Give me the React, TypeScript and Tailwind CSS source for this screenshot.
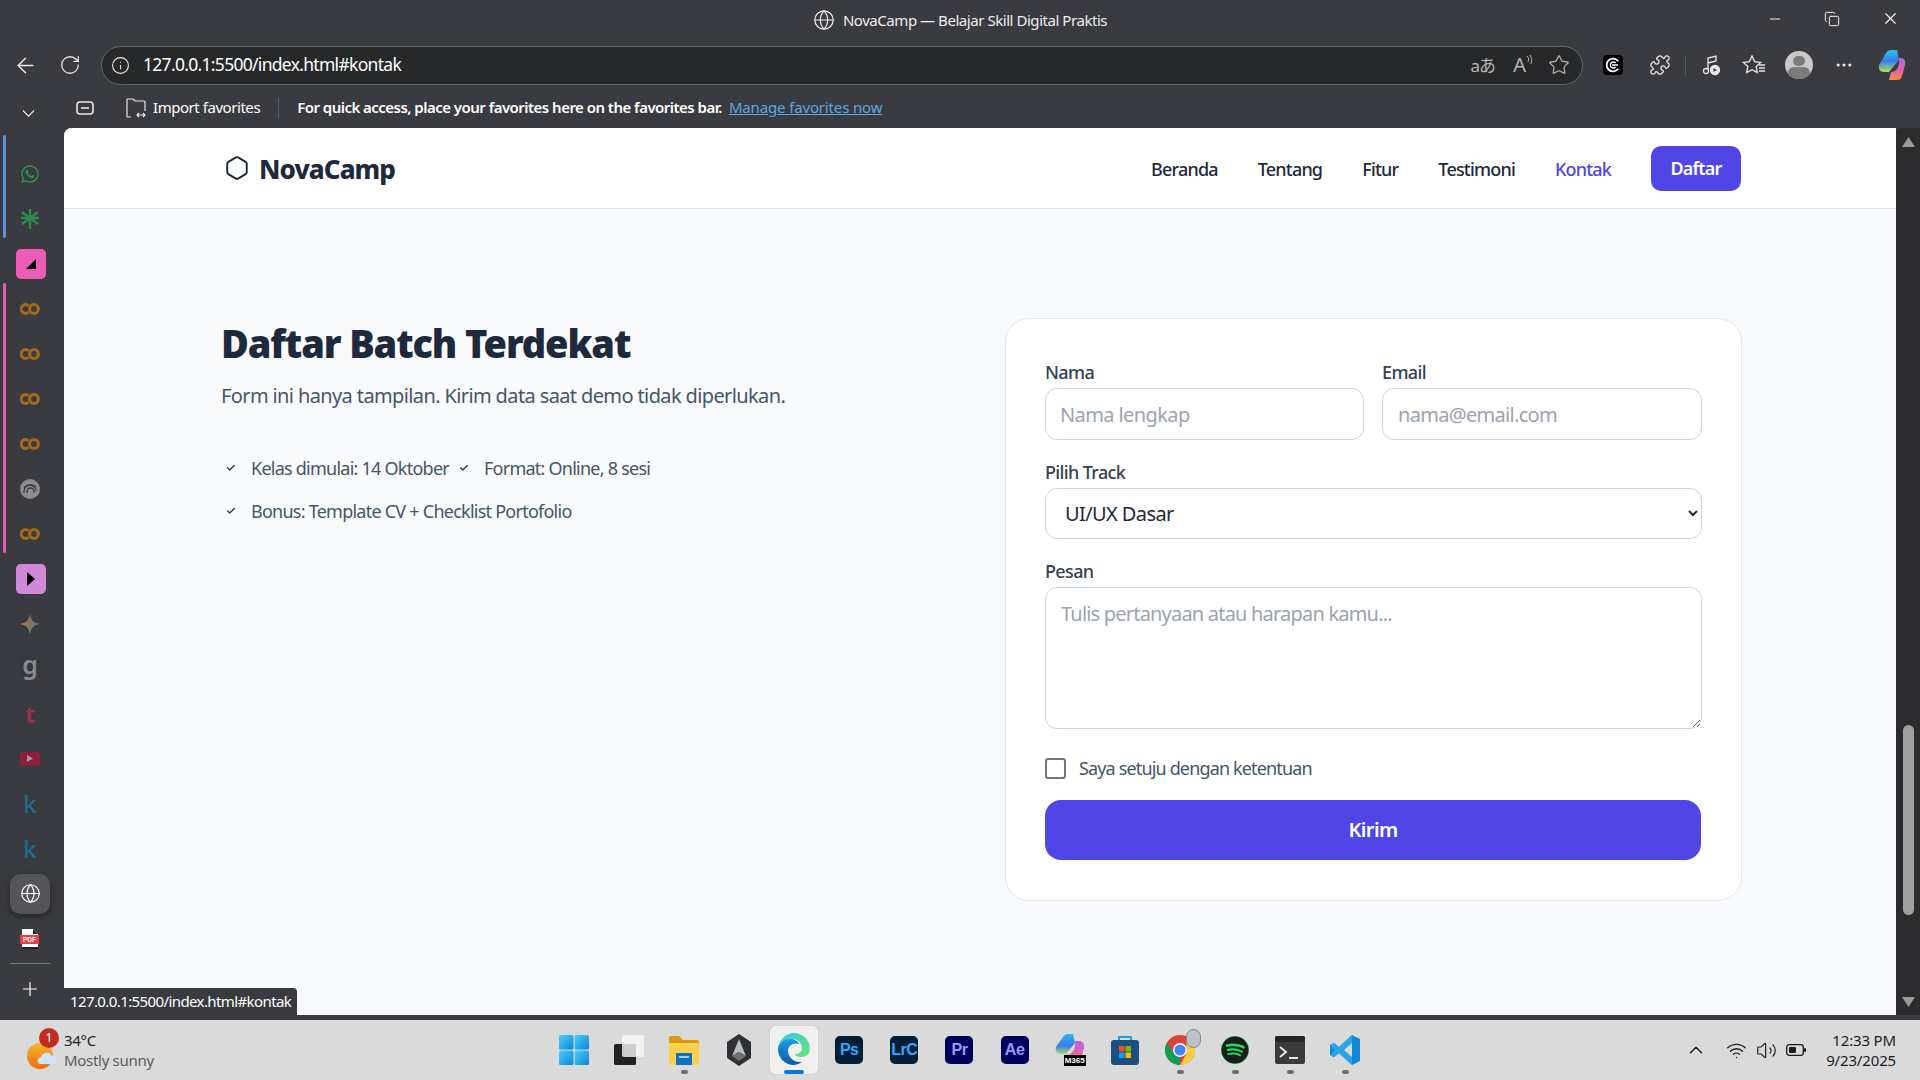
import {
  ArrowLeft,
  Check,
  ChevronDown,
  ChevronUp,
  Copy,
  Globe,
  Hexagon,
  Info,
  Minus,
  MoreHorizontal,
  Plus,
  Puzzle,
  RotateCw,
  Star,
  Volume2,
  Wifi,
  X,
} from "lucide-react";
import { FaSpotify, FaWhatsapp } from "react-icons/fa";

const navLinks = ["Beranda", "Tentang", "Fitur", "Testimoni"];

function ColabIcon() {
  return (
    <svg width="20" height="12" viewBox="0 0 20 12" fill="none" stroke="#a56a1c" strokeWidth="3">
      <path d="M8.6 2.8a4.4 4.4 0 1 0 0 6.4" />
      <circle cx="14" cy="6" r="4.4" />
    </svg>
  );
}

function SideItem({ children }: { children: React.ReactNode }) {
  return <div className="h-[45px] flex items-center justify-center shrink-0">{children}</div>;
}

function Sidebar() {
  return (
    <aside className="relative w-[64px] shrink-0 bg-[#3a3b40] pt-[23px] pr-[4px] flex flex-col">
      <div className="absolute left-[3px] top-[7px] h-[103px] w-[3px] rounded-full bg-[#5b93dc]" />
      <div className="absolute left-[3px] top-[155px] h-[270px] w-[3px] rounded-full bg-[#e45cb3]" />
      <SideItem>
        <FaWhatsapp className="text-[#2f9352]" size={20} />
      </SideItem>
      <SideItem>
        <svg width="18" height="20" viewBox="0 0 18 20" stroke="#2f8a4c" strokeWidth="2.4">
          <path d="M9 0v20M1 3l16 12M17 3L1 15M0 9h18" />
        </svg>
      </SideItem>
      <SideItem>
        <div className="ml-[2px] w-[30px] h-[30px] rounded-[5px] bg-[#ee5cb9] flex items-center justify-center">
          <svg width="12" height="12" viewBox="0 0 12 12">
            <path d="M11 1v10H1z" fill="#000" />
          </svg>
        </div>
      </SideItem>
      <SideItem><ColabIcon /></SideItem>
      <SideItem><ColabIcon /></SideItem>
      <SideItem><ColabIcon /></SideItem>
      <SideItem><ColabIcon /></SideItem>
      <SideItem>
        <svg width="20" height="20" viewBox="0 0 20 20" fill="none">
          <circle cx="10" cy="10" r="10" fill="#8d8d8f" />
          <path d="M4 14v-2a6 6 0 0 1 12 0M7 14v-1.5a3.5 3.5 0 0 1 7 0V14M4 8.5A8 8 0 0 1 16 8" stroke="#3a3b40" strokeWidth="1.3" />
        </svg>
      </SideItem>
      <SideItem><ColabIcon /></SideItem>
      <SideItem>
        <div className="ml-[2px] w-[30px] h-[30px] rounded-[5px] bg-[#cf8ad9] flex items-center justify-center">
          <svg width="10" height="14" viewBox="0 0 10 14">
            <path d="M1 0l8 7-8 7z" fill="#000" />
          </svg>
        </div>
      </SideItem>
      <SideItem>
        <svg width="20" height="20" viewBox="0 0 20 20">
          <defs>
            <linearGradient id="gemH" x1="0" y1="0" x2="1" y2="0">
              <stop offset="0" stopColor="#c9683a" />
              <stop offset="0.5" stopColor="#8a6a80" />
              <stop offset="1" stopColor="#2f6fae" />
            </linearGradient>
            <linearGradient id="gemV" x1="0" y1="0" x2="0" y2="1">
              <stop offset="0" stopColor="#c9683a" stopOpacity="0" />
              <stop offset="1" stopColor="#3f9a5a" />
            </linearGradient>
          </defs>
          <path d="M10 0c1 6 3 9 10 10-7 1-9 4-10 10-1-6-3-9-10-10 7-1 9-4 10-10z" fill="url(#gemH)" />
          <path d="M10 0c1 6 3 9 10 10-7 1-9 4-10 10-1-6-3-9-10-10 7-1 9-4 10-10z" fill="url(#gemV)" />
        </svg>
      </SideItem>
      <SideItem>
        <span className="w-[20px] h-[20px] -mt-[3px] bg-[#34383e] flex items-center justify-center text-[25px] leading-none font-semibold text-[#878a8e] pb-[6px]">g</span>
      </SideItem>
      <SideItem>
        <span className="text-[23px] leading-none font-bold text-[#9a2f4c] mt-[2px]">t</span>
      </SideItem>
      <SideItem>
        <div className="w-[20px] h-[14px] rounded-[3px] bg-[#8e1f3a] flex items-center justify-center">
          <svg width="6" height="7" viewBox="0 0 6 7">
            <path d="M0 0l6 3.5L0 7z" fill="#a39a9c" />
          </svg>
        </div>
      </SideItem>
      <SideItem>
        <span className="text-[24px] leading-none font-medium text-[#1f6a8c]">k</span>
      </SideItem>
      <SideItem>
        <span className="text-[24px] leading-none font-medium text-[#1f6a8c]">k</span>
      </SideItem>
      <SideItem>
        <div className="w-[40px] h-[40px] rounded-[10px] bg-[#54555a] shadow-[0_2px_6px_rgba(0,0,0,0.45)] flex items-center justify-center">
          <Globe size={21} strokeWidth={1.4} className="text-white" />
        </div>
      </SideItem>
      <SideItem>
        <svg width="20" height="20" viewBox="0 0 20 20">
          <path d="M2 0h11l5 5v15H2z" fill="#fff" />
          <rect x="0" y="6" width="19" height="9" fill="#ef3b3f" />
          <path d="M13 0l5 5h-5z" fill="#222" />
          <rect x="2" y="18" width="16" height="2" fill="#222" />
          <text x="9.5" y="13.2" textAnchor="middle" fontSize="6.6" fontWeight="700" fontFamily="Liberation Sans" fill="#fff">PDF</text>
        </svg>
      </SideItem>
      <div className="mx-[10px] mt-[2px] h-px w-[40px] bg-[#77787c]" />
      <div className="flex justify-center mt-[14px]">
        <Plus size={22} strokeWidth={1.3} className="text-white" />
      </div>
    </aside>
  );
}

function ContactForm() {
  return (
    <form className="w-[737px] h-[583px] rounded-[24px] border border-[#e2e8f0] bg-white pl-[39px] pr-[40px] pt-[41px]">
      <div className="grid grid-cols-[319px_320px] gap-x-[18px]">
        <label className="block text-[18px] leading-[24px] font-medium text-[#334155] tracking-[-0.035em]">
          Nama
          <input
            placeholder="Nama lengkap"
            className="block mt-[4px] w-full h-[52px] rounded-[12px] border border-[#cbd5e1] bg-white px-[14px] text-[20px] font-normal tracking-[-0.03em] outline-none placeholder:text-[#9ca3af]"
          />
        </label>
        <label className="block text-[18px] leading-[24px] font-medium text-[#334155] tracking-[-0.035em]">
          Email
          <input
            placeholder="nama@email.com"
            className="block mt-[4px] w-full h-[52px] rounded-[12px] border border-[#cbd5e1] bg-white px-[15px] text-[20px] font-normal tracking-[-0.035em] outline-none placeholder:text-[#9ca3af]"
          />
        </label>
      </div>
      <label className="block mt-[20px] text-[18px] leading-[24px] font-medium text-[#334155] tracking-[-0.035em]">
        Pilih Track
        <select className="block mt-[4px] w-[657px] h-[51px] rounded-[12px] border border-[#cbd5e1] bg-white px-[15px] text-[20px] font-normal text-[#1e293b] tracking-[-0.03em] outline-none">
          <option>UI/UX Dasar</option>
          <option>Frontend Pemula</option>
          <option>Data Analyst</option>
        </select>
      </label>
      <label className="block mt-[20px] text-[18px] leading-[24px] font-medium text-[#334155] tracking-[-0.035em]">
        Pesan
        <textarea
          placeholder="Tulis pertanyaan atau harapan kamu..."
          className="block mt-[4px] w-[657px] h-[142px] rounded-[12px] border border-[#cbd5e1] bg-white px-[15px] py-[14px] text-[20px] font-normal tracking-[-0.04em] outline-none placeholder:text-[#9ca3af]"
        />
      </label>
      <label className="flex items-center gap-[13px] mt-[27px] h-[24px] text-[18px] text-[#475569] tracking-[-0.047em]">
        <input type="checkbox" className="w-[21px] h-[21px] m-0 appearance-none rounded-[3px] border-2 border-[#767676] bg-white" />
        Saya setuju dengan ketentuan
      </label>
      <button type="button" className="block mt-[20px] w-[656px] h-[60px] rounded-[16px] bg-[#4f46e5] text-[20px] font-semibold text-white tracking-[-0.03em]">
        Kirim
      </button>
    </form>
  );
}

function Page() {
  return (
    <main className="relative flex-1 min-w-0 mb-[5px] bg-[#f8fafc] rounded-tl-[8px] overflow-hidden">
      <header className="h-[81px] bg-white border-b border-[#e2e8f0] pl-[157px] flex items-center">
        <div className="w-[1520px] flex items-center justify-between">
          <div className="flex items-center gap-[9px] pl-[3px] pt-[2px]">
            <Hexagon size={26} strokeWidth={1.8} className="text-[#1e293b] -mt-[3px]" />
            <span className="text-[26px] font-extrabold text-[#1e293b] tracking-[-0.035em]">NovaCamp</span>
          </div>
          <nav className="flex items-center gap-[40px] text-[18px] font-medium text-[#1e293b] tracking-[-0.045em]">
            {navLinks.map((link) => (
              <a key={link} className="pt-[2px]">{link}</a>
            ))}
            <a className="pt-[2px] text-[#4f46e5]">Kontak</a>
            <a className="h-[45px] w-[90px] rounded-[10px] bg-[#4f46e5] text-white font-semibold flex items-center justify-center">Daftar</a>
          </nav>
        </div>
      </header>
      <section className="pl-[157px] pt-[109px]">
        <div className="w-[1521px] grid grid-cols-[736px_737px] gap-x-[48px]">
          <div>
            <h2 className="text-[38px] leading-[50px] font-black text-[#1e293b] tracking-[-0.03em]">Daftar Batch Terdekat</h2>
            <p className="mt-[14px] text-[20px] leading-[28px] text-[#475569] tracking-[-0.031em]">
              Form ini hanya tampilan. Kirim data saat demo tidak diperlukan.
            </p>
            <ul className="mt-[44px] text-[18px] leading-[24px] text-[#475569] tracking-[-0.042em]">
              <li className="inline-flex items-center h-[24px]">
                <Check size={10} strokeWidth={3.5} className="ml-[5px] mr-[15px] text-[#334155]" />
                Kelas dimulai: 14 Oktober
              </li>
              <li className="inline-flex items-center h-[24px]">
                <Check size={10} strokeWidth={3.5} className="ml-[10px] mr-[15px] text-[#334155]" />
                Format: Online, 8 sesi
              </li>
              <li className="flex items-center h-[24px] mt-[19px]">
                <Check size={10} strokeWidth={3.5} className="ml-[5px] mr-[15px] text-[#334155]" />
                Bonus: Template CV + Checklist Portofolio
              </li>
            </ul>
          </div>
          <ContactForm />
        </div>
      </section>
      <div className="absolute left-0 bottom-0 h-[27px] px-[6px] rounded-tr-[4px] bg-[#3a3b40] flex items-center text-[15px] text-white tracking-[-0.04em]">
        127.0.0.1:5500/index.html#kontak
      </div>
    </main>
  );
}

function Scrollbar() {
  return (
    <div className="w-[24px] shrink-0 mb-[5px] bg-[#2c2c2e] rounded-tl-[6px] flex flex-col items-center">
      <svg width="13" height="10" viewBox="0 0 13 10" className="mt-[9px]">
        <path d="M6.5 0l6.5 10H0z" fill="#9a9a9a" />
      </svg>
      <div className="mt-[578px] w-[11px] h-[190px] rounded-full bg-[#9f9f9f]" />
      <svg width="13" height="10" viewBox="0 0 13 10" className="mt-[82px]">
        <path d="M6.5 10l6.5-10H0z" fill="#9a9a9a" />
      </svg>
    </div>
  );
}

function TaskSlot({ children, dot, active }: { children: React.ReactNode; dot?: boolean; active?: boolean }) {
  return (
    <div className={`relative w-[48px] h-[48px] mx-[3.57px] rounded-[5px] flex items-center justify-center ${active ? "bg-[#f0f0f0] shadow-[0_0_1px_rgba(0,0,0,0.3)]" : ""}`}>
      {children}
      {dot && <span className="absolute bottom-[0px] left-[21px] w-[7px] h-[4px] rounded-full bg-[#6d6d6d]" />}
      {active && <span className="absolute bottom-[0px] left-[14px] w-[20px] h-[4px] rounded-full bg-[#0a78d4]" />}
    </div>
  );
}

function AppTile({ label, bg, color }: { label: string; bg: string; color: string }) {
  return (
    <div className="w-[28px] h-[28px] rounded-[5px] flex items-center justify-center font-['Liberation_Sans',sans-serif] text-[16px] font-bold tracking-[-0.03em]" style={{ backgroundColor: bg, color }}>
      {label}
    </div>
  );
}

function Taskbar() {
  return (
    <footer className="h-[60px] bg-[#dadada] flex items-center relative">
      <div className="w-[547px] pl-[26px] flex items-center shrink-0">
        <div className="relative w-[38px] h-[40px]">
          <svg width="38" height="40" viewBox="0 0 38 40">
            <defs>
              <linearGradient id="sun" x1="0" y1="0" x2="0" y2="1">
                <stop offset="0" stopColor="#f9b52a" />
                <stop offset="1" stopColor="#ee6f12" />
              </linearGradient>
            </defs>
            <circle cx="14" cy="26" r="13" fill="url(#sun)" />
            <path d="M13 34a4 4 0 0 1 2-7 6 6 0 0 1 11-1 4 4 0 0 1 2 8z" fill="#cfe3f7" />
          </svg>
          <span className="absolute left-[13px] top-[-2px] w-[20px] h-[20px] rounded-full bg-[#c42b1c] text-white text-[13px] flex items-center justify-center">1</span>
        </div>
        <div className="leading-[20px] text-[15px] tracking-[-0.02em]">
          <div className="text-[#222]">34°C</div>
          <div className="text-[#5c5c5c]">Mostly sunny</div>
        </div>
      </div>
      <div className="flex items-center -ml-[1px]">
        <TaskSlot>
          <svg width="30" height="30" viewBox="0 0 30 30">
            <defs>
              <linearGradient id="win" x1="0" y1="0" x2="1" y2="1">
                <stop offset="0" stopColor="#4fd0f7" />
                <stop offset="1" stopColor="#0a86d8" />
              </linearGradient>
            </defs>
            <rect x="0" y="0" width="14.4" height="14.4" rx="1.5" fill="url(#win)" />
            <rect x="15.6" y="0" width="14.4" height="14.4" rx="1.5" fill="url(#win)" />
            <rect x="0" y="15.6" width="14.4" height="14.4" rx="1.5" fill="url(#win)" />
            <rect x="15.6" y="15.6" width="14.4" height="14.4" rx="1.5" fill="url(#win)" />
          </svg>
        </TaskSlot>
        <TaskSlot>
          <svg width="30" height="30" viewBox="0 0 30 30">
            <rect x="0" y="9" width="22" height="21" rx="1.5" fill="#222" />
            <rect x="8" y="0" width="22" height="22" rx="2" fill="#f7f7f7" fillOpacity="0.8" />
          </svg>
        </TaskSlot>
        <TaskSlot dot>
          <svg width="30" height="30" viewBox="0 0 30 30">
            <path d="M0 3a2 2 0 0 1 2-2h8l4 4h14a2 2 0 0 1 2 2v3H0z" fill="#d99a12" />
            <path d="M0 8h28a2 2 0 0 1 2 2v18a2 2 0 0 1-2 2H2a2 2 0 0 1-2-2z" fill="#fbd04b" />
            <rect x="7" y="18" width="16" height="12" rx="1" fill="#0f6fc6" />
            <rect x="10" y="21" width="10" height="2" fill="#9fd3f5" />
          </svg>
        </TaskSlot>
        <TaskSlot>
          <svg width="28" height="32" viewBox="0 0 28 32">
            <path d="M14 0l12 8v16l-12 8-12-8V8z" fill="#2f3033" />
            <path d="M14 5l7 17-7-4-7 4z" fill="#b8bbc0" />
            <path d="M14 18l7 4-7 5-7-5z" fill="#6d7075" />
          </svg>
        </TaskSlot>
        <TaskSlot active>
          <svg width="32" height="32" viewBox="0 0 32 32" className="-mt-[3px]">
            <defs>
              <linearGradient id="edgeA" x1="0" y1="0" x2="0" y2="1">
                <stop offset="0" stopColor="#1b9de2" />
                <stop offset="1" stopColor="#0c59a4" />
              </linearGradient>
              <linearGradient id="edgeB" x1="0" y1="0" x2="1" y2="1">
                <stop offset="0" stopColor="#35c1f1" />
                <stop offset="1" stopColor="#66eb6e" />
              </linearGradient>
            </defs>
            <path d="M16 0a16 16 0 0 1 16 16c0 5-4 8-9 8-3 0-6-1-6-3 4 0 7-2 7-6 0-5-4-9-10-9C8 6 2 10 1 12 3 5 9 0 16 0z" fill="url(#edgeB)" />
            <path d="M1 12c2-3 6-6 12-6 3 0 7 2 8 5-5-2-11 1-11 7 0 6 6 12 14 11a16 16 0 0 1-8 3C7 32 0 25 0 16c0-1 0-3 1-4z" fill="url(#edgeA)" />
          </svg>
        </TaskSlot>
        <TaskSlot><AppTile label="Ps" bg="#001e36" color="#31a8ff" /></TaskSlot>
        <TaskSlot><AppTile label="LrC" bg="#001e36" color="#31a8ff" /></TaskSlot>
        <TaskSlot><AppTile label="Pr" bg="#00005b" color="#9999ff" /></TaskSlot>
        <TaskSlot><AppTile label="Ae" bg="#00005b" color="#9999ff" /></TaskSlot>
        <TaskSlot>
          <div className="relative w-[30px] h-[32px]">
            <svg width="30" height="28" viewBox="0 0 30 28">
              <defs>
                <linearGradient id="m365L" x1="0" y1="0" x2="0" y2="1">
                  <stop offset="0" stopColor="#28b8ee" />
                  <stop offset="0.6" stopColor="#3a7bf0" />
                  <stop offset="1" stopColor="#a8e060" />
                </linearGradient>
                <linearGradient id="m365R" x1="0" y1="0" x2="0" y2="1">
                  <stop offset="0" stopColor="#b267e8" />
                  <stop offset="0.6" stopColor="#e860a8" />
                  <stop offset="1" stopColor="#f59030" />
                </linearGradient>
              </defs>
              <path d="M8 3c1-2 3-3 5-3h5l2 9-9 11H6c-4 0-6-3-5-7z" fill="url(#m365L)" />
              <path d="M20 7h4c4 0 6 3 5 7l-3 10c-1 3-3 4-5 4H9l2-7c6 0 10-6 9-14z" fill="url(#m365R)" />
            </svg>
            <span className="absolute left-[9px] bottom-[0px] bg-black text-white text-[8px] leading-[11px] px-[1px] font-['Liberation_Sans',sans-serif] font-bold">M365</span>
          </div>
        </TaskSlot>
        <TaskSlot>
          <svg width="28" height="30" viewBox="0 0 28 30">
            <path d="M8 6V2h12v4" fill="none" stroke="#1ba1e2" strokeWidth="2" />
            <rect x="0" y="5" width="28" height="25" rx="3" fill="#1c4e80" />
            <rect x="8" y="11" width="5.5" height="5.5" fill="#f25022" />
            <rect x="14.5" y="11" width="5.5" height="5.5" fill="#7fba00" />
            <rect x="8" y="17.5" width="5.5" height="5.5" fill="#00a4ef" />
            <rect x="14.5" y="17.5" width="5.5" height="5.5" fill="#ffb900" />
          </svg>
        </TaskSlot>
        <TaskSlot dot>
          <div className="relative w-[30px] h-[30px]">
            <svg width="30" height="30" viewBox="0 0 30 30">
              <circle cx="15" cy="15" r="15" fill="#db4437" />
              <path d="M15 30A15 15 0 0 1 2 7.5L8.5 18.8 15 15z" fill="#0f9d58" />
              <path d="M28 7.5A15 15 0 0 1 15 30l6.5-11.2V7.5z" fill="#ffcd40" />
              <circle cx="15" cy="15" r="7" fill="#fff" />
              <circle cx="15" cy="15" r="5.6" fill="#4285f4" />
            </svg>
            <span className="absolute -right-[6px] -top-[6px] w-[15px] h-[19px] rounded-full bg-[#b9c2c4] border border-[#7f8a8c]" />
          </div>
        </TaskSlot>
        <TaskSlot dot>
          <FaSpotify size={28} className="text-[#1c1c1c] bg-[#1ed760] rounded-full" />
        </TaskSlot>
        <TaskSlot dot>
          <svg width="30" height="28" viewBox="0 0 30 28">
            <rect width="30" height="28" rx="2" fill="#3a3a3a" />
            <rect width="30" height="6" rx="2" fill="#242424" />
            <path d="M5 11l6 5-6 5" fill="none" stroke="#e8e8e8" strokeWidth="2" />
            <path d="M14 22h9" stroke="#e8e8e8" strokeWidth="2" />
          </svg>
        </TaskSlot>
        <TaskSlot dot>
          <svg width="30" height="30" viewBox="0 0 30 30">
            <path d="M22 0l8 4v22l-8 4L9 18l-5 4-4-2V10l4-2 5 4z" fill="#0e8ad6" />
            <path d="M22 0L9 12 4 8l-4 2 5 5-5 5 4 2 5-4 13 12z" fill="#2aa5ea" />
            <path d="M22 8v14l-8-7z" fill="#dadada" />
          </svg>
        </TaskSlot>
      </div>
      <div className="ml-auto pr-[24px] flex items-center text-[#1c1c1c]">
        <ChevronUp size={22} strokeWidth={1.6} className="mr-[19px]" />
        <Wifi size={21} strokeWidth={1.5} className="mr-[9px]" />
        <Volume2 size={21} strokeWidth={1.4} className="mr-[9px]" />
        <svg width="20" height="12" viewBox="0 0 20 12" className="mr-[20px]">
          <rect x="0.7" y="0.7" width="16.6" height="10.6" rx="2.5" fill="none" stroke="#1c1c1c" strokeWidth="1.3" />
          <rect x="3" y="3" width="7" height="6" rx="1" fill="#1c1c1c" />
          <rect x="18" y="4" width="2" height="4" rx="1" fill="#1c1c1c" />
        </svg>
        <div className="text-right text-[15px] leading-[20px] tracking-[-0.01em]">
          <div>12:33 PM</div>
          <div>9/23/2025</div>
        </div>
      </div>
    </footer>
  );
}

export default function App() {
  return (
    <div className="w-[1920px] h-[1080px] overflow-hidden flex flex-col bg-[#3a3b40] font-['Noto_Sans',sans-serif]">
      <div className="h-[40px] flex items-center relative shrink-0 text-[#eeeeee]">
        <div className="mx-auto flex items-center gap-[8px] text-[15px] tracking-[-0.03em]">
          <Globe size={22} strokeWidth={1.3} />
          NovaCamp — Belajar Skill Digital Praktis
        </div>
        <div className="absolute right-[20px] top-[9px] flex items-center gap-[41px] text-white">
          <Minus size={16} strokeWidth={1.4} />
          <Copy size={16} strokeWidth={1.4} />
          <X size={19} strokeWidth={1.4} />
        </div>
      </div>
      <div className="h-[50px] flex items-center pl-[13px] shrink-0 text-[#e8e8e8]">
        <ArrowLeft size={25} strokeWidth={1.4} />
        <RotateCw size={22} strokeWidth={1.4} className="ml-[21px]" />
        <div className="ml-[20px] w-[1482px] h-[39px] rounded-full border border-[#66676b] bg-[#27282a] flex items-center pl-[9px] pr-[12px]">
          <Info size={19} strokeWidth={1.4} />
          <span className="ml-[13px] mb-[2px] text-[17.5px] text-white tracking-[-0.04em]">127.0.0.1:5500/index.html#kontak</span>
          <div className="ml-auto flex items-center gap-[15px] text-[#b6b6b6]">
            <span className="mr-[3px] text-[17px] leading-none tracking-[-0.05em] font-['Noto_Sans','Noto_Sans_CJK_JP',sans-serif]">aあ</span>
            <span className="flex items-start text-[20px] leading-none">
              A
              <svg width="7" height="12" viewBox="0 0 7 12" fill="none" stroke="#b6b6b6" strokeWidth="1">
                <path d="M1 1c2 2 2 4 1 6M4 0c2 3 2 6 1 9" />
              </svg>
            </span>
            <Star size={22} strokeWidth={1.3} />
          </div>
        </div>
        <svg width="20" height="20" viewBox="0 0 20 20" fill="none" stroke="#fff" className="ml-[20px]">
          <rect width="20" height="20" rx="4" fill="#000" stroke="none" />
          <path d="M15.2 6.2a6.4 6.4 0 1 0 0 7.6" strokeWidth="1.8" />
          <path d="M12.6 8a3 3 0 1 0 0 4M9 10h6" strokeWidth="1.4" />
        </svg>
        <Puzzle size={22} strokeWidth={1.4} className="ml-[26px]" />
        <div className="ml-[14px] w-px h-[20px] bg-[#5a5b5f]" />
        <svg width="20" height="22" viewBox="0 0 20 22" fill="none" stroke="#e8e8e8" strokeWidth="1.3" className="ml-[16px]">
          <path d="M6 16V4l8-2v5l-8 2" />
          <circle cx="4" cy="17" r="2.5" />
          <circle cx="13" cy="16" r="4.5" fill="#e8e8e8" />
          <path d="M11.5 14v4l3.5-2z" fill="#3a3b40" stroke="none" />
        </svg>
        <svg width="24" height="22" viewBox="0 0 24 22" fill="none" stroke="#e8e8e8" strokeWidth="1.3" className="ml-[20px]">
          <path d="M10 2l2.6 5.6 6 .8-4.4 4.2 1.1 6L10 15.7 4.7 18.6l1.1-6L1.4 8.4l6-.8z" />
          <path d="M17 11h6M17 14h6M17 17h6" />
        </svg>
        <div className="ml-[19px] w-[28px] h-[28px] rounded-full bg-[#c9c9c9] overflow-hidden flex flex-col items-center">
          <span className="mt-[5px] w-[12px] h-[12px] rounded-full bg-[#7b7b7b]" />
          <span className="mt-[1px] w-[22px] h-[14px] rounded-full bg-[#7b7b7b]" />
        </div>
        <MoreHorizontal size={20} strokeWidth={1.8} className="ml-[21px]" />
        <svg width="30" height="30" viewBox="0 0 30 30" className="ml-[23px]">
          <defs>
            <linearGradient id="copL" x1="0" y1="0" x2="0" y2="1">
              <stop offset="0" stopColor="#28c8e8" />
              <stop offset="0.5" stopColor="#3a7bf0" />
              <stop offset="1" stopColor="#b0e050" />
            </linearGradient>
            <linearGradient id="copR" x1="0" y1="0" x2="0" y2="1">
              <stop offset="0" stopColor="#b267e8" />
              <stop offset="0.6" stopColor="#e860a8" />
              <stop offset="1" stopColor="#f59030" />
            </linearGradient>
          </defs>
          <path d="M9 3c1-2 3-3 5-3h6l2 10-10 12H7C3 22 1 19 2 15z" fill="url(#copL)" />
          <path d="M22 8h2c3 0 5 3 4 7l-3 11c-1 3-3 4-5 4h-8l2-8c6 0 9-6 8-14z" fill="url(#copR)" />
        </svg>
      </div>
      <div className="h-[38px] pb-[3px] flex items-center shrink-0 text-white">
        <ChevronDown size={21} strokeWidth={1.3} className="ml-[18px] mt-[11px]" />
        <svg width="20" height="16" viewBox="0 0 20 16" fill="none" stroke="#e8e8e8" strokeWidth="1.6" className="ml-[36px]">
          <rect x="2" y="2" width="16" height="12" rx="3" />
          <path d="M6 8h8" />
        </svg>
        <svg width="22" height="22" viewBox="0 0 22 22" fill="none" stroke="#e8e8e8" strokeWidth="1.2" className="ml-[30px]">
          <path d="M6 20H3a1 1 0 0 1-1-1V3a1 1 0 0 1 1-1h5l2 2h9a1 1 0 0 1 1 1v9" />
          <path d="M12 18h8M14 16l-2 2 2 2M18 16l2 2-2 2" />
        </svg>
        <span className="ml-[6px] text-[15px] tracking-[-0.03em]">Import favorites</span>
        <div className="ml-[18px] w-px h-[20px] bg-[#5a5b5f]" />
        <span className="ml-[18px] text-[15px] font-semibold tracking-[-0.035em]">For quick access, place your favorites here on the favorites bar.</span>
        <a className="ml-[7px] text-[15px] text-[#5ba8e5] underline tracking-[-0.01em]">Manage favorites now</a>
      </div>
      <div className="h-[892px] flex shrink-0">
        <Sidebar />
        <Page />
        <Scrollbar />
      </div>
      <Taskbar />
    </div>
  );
}
